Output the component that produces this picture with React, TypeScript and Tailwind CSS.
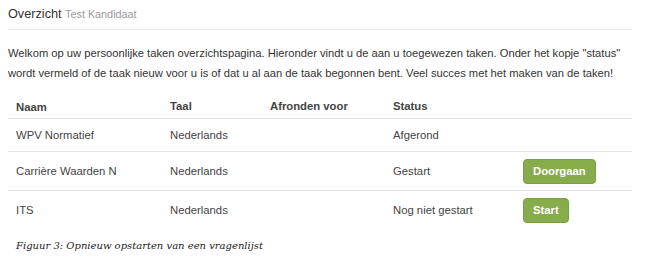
export default function App() {
  const rows = [
    { name: 'WPV Normatief', lang: 'Nederlands', due: '', status: 'Afgerond', action: '' },
    { name: 'Carrière Waarden N', lang: 'Nederlands', due: '', status: 'Gestart', action: 'Doorgaan' },
    { name: 'ITS', lang: 'Nederlands', due: '', status: 'Nog niet gestart', action: 'Start' },
  ];

  return (
    <div className="w-[650px] h-[271px] bg-white overflow-hidden font-['Liberation_Sans',Arial,sans-serif] text-[#333]">
      {/* Page header */}
      <div className="mx-2 w-[624px] border-b border-[#eee] pt-[4px] pb-[5px]">
        <h1 className="text-[12.7px] leading-[20px] font-normal text-[#333]">
          Overzicht <span className="text-[10.8px] text-[#999]">Test Kandidaat</span>
        </h1>
      </div>

      <p className="mx-2 w-[628px] mt-[13px] text-[11.2px] leading-[20px] text-[#333]">
        Welkom op uw persoonlijke taken overzichtspagina. Hieronder vindt u de aan u toegewezen taken. Onder het kopje "status" wordt vermeld of de taak nieuw voor u is of dat u al aan de taak begonnen bent. Veel succes met het maken van de taken!
      </p>

      {/* Tasks table */}
      <table className="mx-2 mt-[11px] w-[624px] border-collapse text-[11.3px] text-[#444]">
        <thead>
          <tr className="border-b border-[#e6e6e6]">
            <th className="w-[162px] pl-2 pt-[4px] pb-[2px] leading-[18px] text-left font-bold">Naam</th>
            <th className="w-[100px] leading-[18px] text-left font-bold">Taal</th>
            <th className="w-[123px] leading-[18px] text-left font-bold">Afronden voor</th>
            <th className="w-[130px] leading-[18px] text-left font-bold">Status</th>
            <th></th>
          </tr>
        </thead>
        <tbody>
          {rows.map((r, i) => (
            <tr key={r.name} className={i < rows.length - 1 ? 'border-b border-[#e6e6e6]' : ''}>
              <td className={`pl-2 leading-[18px] ${i === 0 ? 'h-[33px]' : 'h-[39px]'}`}>{r.name}</td>
              <td className="leading-[18px]">{r.lang}</td>
              <td className="leading-[18px]">{r.due}</td>
              <td className="leading-[18px]">{r.status}</td>
              <td>
                {r.action && (
                  <button className="h-[25px] px-[9px] rounded-[4px] bg-[#86ac4c] border border-[#7a9e43] text-white text-[11.3px] leading-[18px] font-bold">
                    {r.action}
                  </button>
                )}
              </td>
            </tr>
          ))}
        </tbody>
      </table>

      <p className="ml-4 mt-[8px] font-['DejaVu_Serif',serif] italic text-[10px] leading-[16px] text-[#222]">
        Figuur 3: Opnieuw opstarten van een vragenlijst
      </p>
    </div>
  );
}
